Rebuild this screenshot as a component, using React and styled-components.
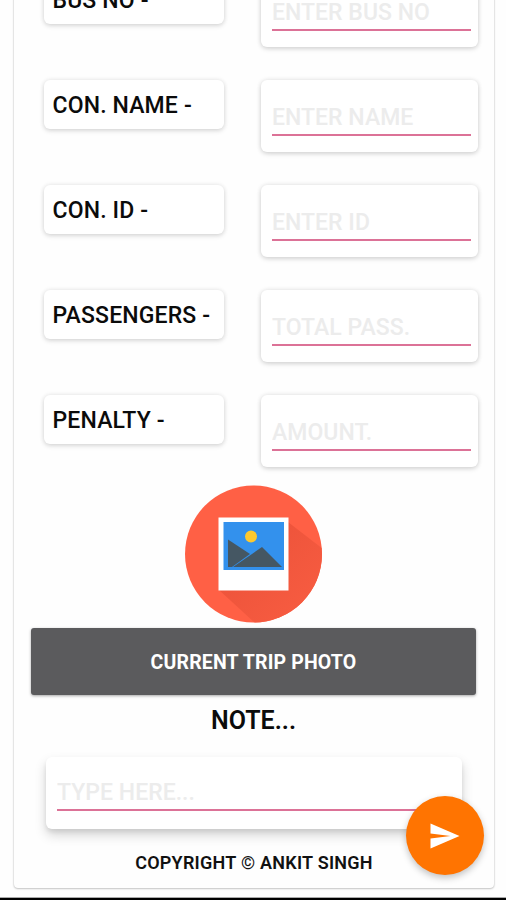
import React from "react";
import styled, { createGlobalStyle } from "styled-components";

const GlobalStyle = createGlobalStyle`
  * { box-sizing: border-box; }
  body { margin: 0; background: #fefefe; font-family: Roboto, "Liberation Sans", sans-serif; }
`;

const Screen = styled.main`
  position: relative;
  height: 900px;
  overflow: hidden;
  display: flex;
  flex-direction: column;
  justify-content: flex-end;
`;

const Sheet = styled.section`
  flex: none;
  height: 928px;
  width: 480px;
  margin: 0 0 10px 14px;
  padding-top: 15px;
  border-radius: 4px;
  background: #fefefe;
  box-shadow: 0 0 2px rgba(0, 0, 0, 0.2), 0 1px 2px rgba(0, 0, 0, 0.18);
  display: flex;
  flex-direction: column;
`;

const NavEdge = styled.div`
  flex: none;
  height: 2px;
  background: #000;
  box-shadow: 0 -1px 0 #aaa;
`;

const Rows = styled.div`
  display: flex;
  flex-direction: column;
  gap: 33px;
  padding: 0 16px 0 30px;
`;

const Row = styled.div`
  display: flex;
  justify-content: space-between;
  align-items: flex-start;
  height: 72px;
`;

const LabelBox = styled.label`
  width: 180px;
  height: 49px;
  padding-left: 8.5px;
  border-radius: 6px;
  background: #fff;
  box-shadow: 0 0 5px rgba(0, 0, 0, 0.09), 0 2px 5px rgba(0, 0, 0, 0.12);
  font-size: 23px;
  font-weight: 500;
  line-height: 52px;
  letter-spacing: 0.15px;
  white-space: nowrap;
  color: #0b0b0b;
`;

const FieldBox = styled.div`
  width: 217px;
  height: 72px;
  padding: 20px 7px 0 11px;
  border-radius: 6px;
  background: #fff;
  box-shadow: 0 0 5px rgba(0, 0, 0, 0.1), 0 2px 5px rgba(0, 0, 0, 0.13);
`;

const NoteBox = styled.div`
  width: 416px;
  height: 72px;
  margin: 19px 0 0 32px;
  padding: 18px 11px 0;
  border-radius: 6px;
  background: #fff;
  box-shadow: 0 6px 12px rgba(0, 0, 0, 0.17), 0 3px 4px rgba(0, 0, 0, 0.07);
`;

const Input = styled.input`
  display: block;
  width: 100%;
  height: 36px;
  padding: 0;
  border: 0;
  border-bottom: 2px solid #dc7297;
  border-radius: 0;
  outline: 0;
  background: transparent;
  font: 500 23px Roboto, "Liberation Sans", sans-serif;
  letter-spacing: 0.03px;
  color: #111;
  &::placeholder { color: #ececec; opacity: 1; }
`;

const PhotoIcon = styled.svg`
  display: block;
  width: 138px;
  height: 138px;
  margin: 18px 0 0 171px;
`;

const PhotoButton = styled.button`
  flex: none;
  width: 445px;
  height: 67px;
  margin: 5px 0 0 17px;
  padding: 2px 0 0;
  border: 0;
  border-radius: 3px;
  background: #5b5b5d;
  box-shadow: 0 1px 3px rgba(0, 0, 0, 0.35);
  font: 700 19.5px Roboto, "Liberation Sans", sans-serif;
  letter-spacing: 0.15px;
  color: #fff;
`;

const NoteTitle = styled.h2`
  margin: 8px 0 0;
  font-size: 25px;
  font-weight: 600;
  line-height: 35px;
  text-align: center;
  text-indent: -1px;
  color: #0b0b0b;
`;

const Copyright = styled.p`
  margin: 22px 0 0;
  font-size: 18px;
  font-weight: 600;
  line-height: 24px;
  letter-spacing: 0.25px;
  text-align: center;
  color: #111;
`;

const SendButton = styled.button`
  position: absolute;
  right: 22px;
  bottom: 25px;
  width: 78px;
  height: 79px;
  padding: 0;
  border: 0;
  border-radius: 50%;
  background: #ff7401;
  box-shadow: 0 3px 7px rgba(0, 0, 0, 0.24);
  display: grid;
  place-items: center;
  svg { display: block; }
`;

const FIELDS = [
  { label: "BUS NO -", hint: "ENTER BUS NO" },
  { label: "CON. NAME -", hint: "ENTER NAME" },
  { label: "CON. ID -", hint: "ENTER ID" },
  { label: "PASSENGERS -", hint: "TOTAL PASS." },
  { label: "PENALTY -", hint: "AMOUNT." },
];

function TripPhoto() {
  return (
    <PhotoIcon viewBox="0 0 138 138" aria-hidden="true">
      <defs>
        <clipPath id="disc"><circle cx="68.5" cy="69" r="68.5" /></clipPath>
        <linearGradient id="shade" gradientUnits="userSpaceOnUse" x1="68" y1="69" x2="118" y2="119">
          <stop offset="0" stopColor="#ee543b" />
          <stop offset="1" stopColor="#f65b40" />
        </linearGradient>
      </defs>
      <circle cx="68.5" cy="69" r="68.5" fill="#ff6045" />
      <path d="M103 37L138 64V138H70L34 105Z" fill="url(#shade)" clipPath="url(#disc)" />
      <path d="M33.5 32.5H103.5V105.5H33.5Z" fill="#fff" />
      <path d="M38.5 37H99V85H38.5Z" fill="#3391ed" />
      <circle cx="66" cy="51.500" r="6" fill="#fdc92f" />
      <path d="M43 54.500L65 69L47 82H43Z" fill="#455763" />
      <path d="M48 82L77 62L97 82Z" fill="#455763" />
    </PhotoIcon>
  );
}

export default function App() {
  return (
    <>
      <GlobalStyle />
      <Screen>
        <Sheet>
          <Rows>
            {FIELDS.map((f) => (
              <Row key={f.label}>
                <LabelBox>{f.label}</LabelBox>
                <FieldBox><Input placeholder={f.hint} aria-label={f.label} /></FieldBox>
              </Row>
            ))}
          </Rows>
          <TripPhoto />
          <PhotoButton>CURRENT TRIP PHOTO</PhotoButton>
          <NoteTitle>NOTE...</NoteTitle>
          <NoteBox><Input placeholder="TYPE HERE..." aria-label="Note" /></NoteBox>
          <Copyright>COPYRIGHT © ANKIT SINGH</Copyright>
        </Sheet>
        <NavEdge />
        <SendButton aria-label="Send">
          <svg width="30" height="26" viewBox="0 0 30 26">
            <path d="M0.500 0.500L29.500 13L0.500 25.500V15.500L20.500 13L0.500 10.500Z" fill="#fff" />
          </svg>
        </SendButton>
      </Screen>
    </>
  );
}
